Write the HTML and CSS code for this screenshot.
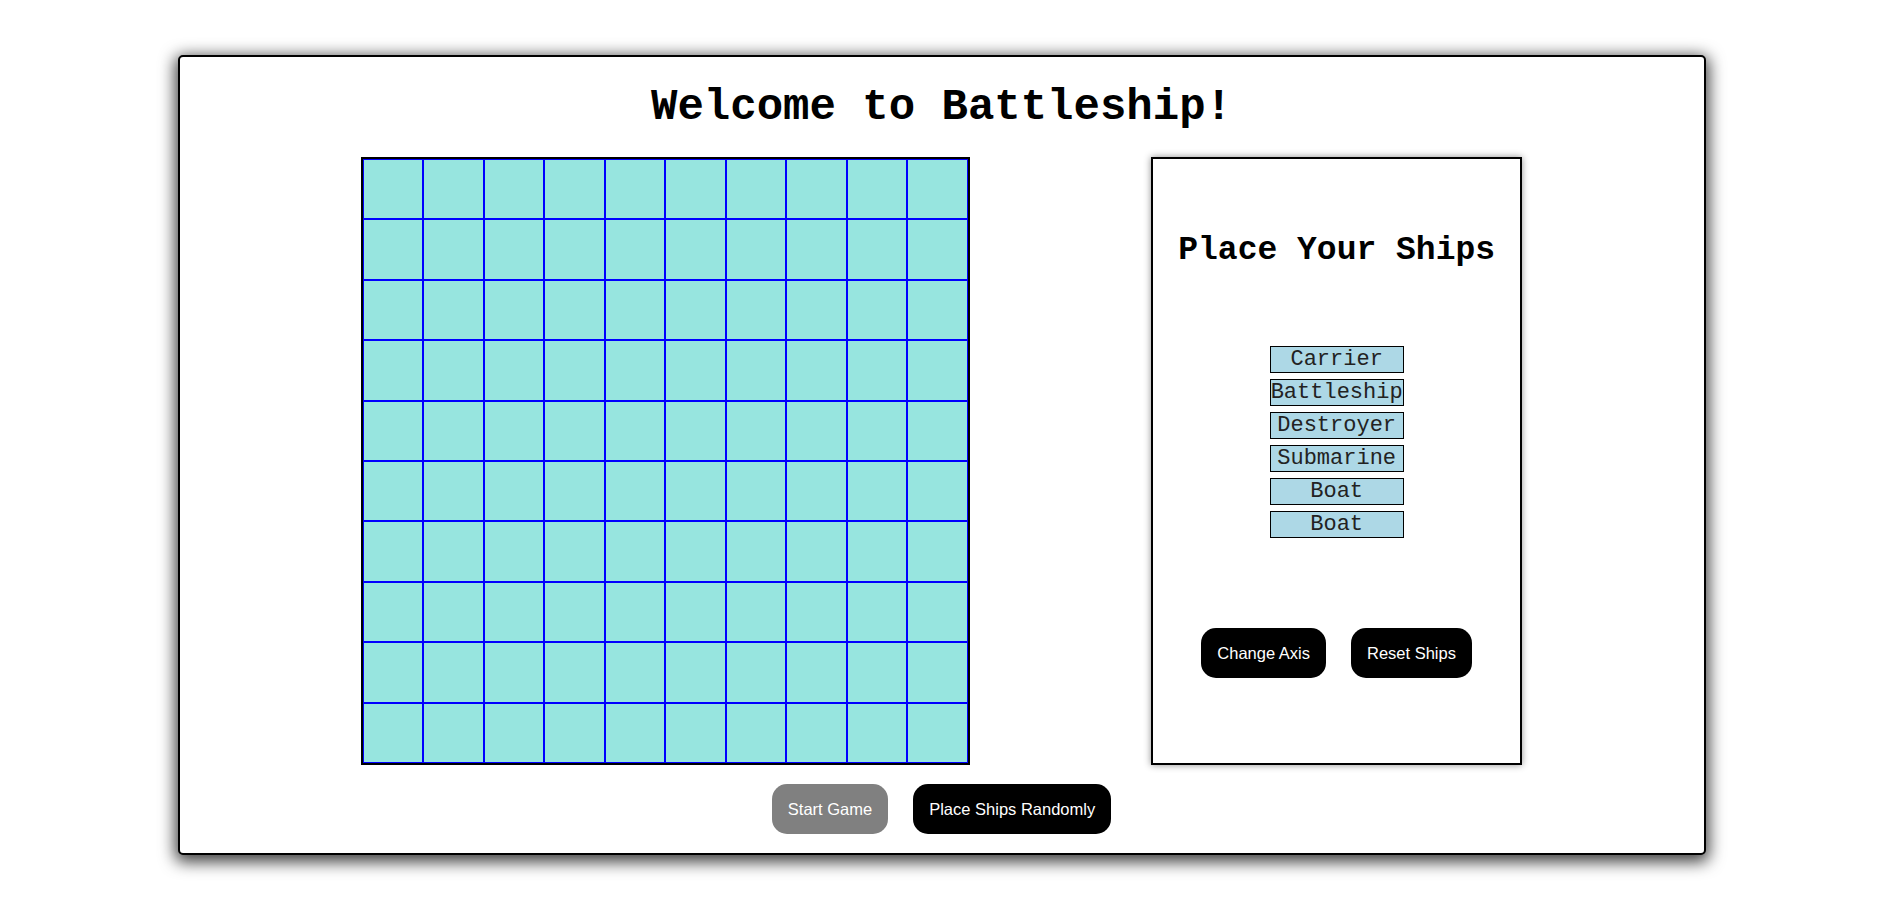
FILE: index.html
```html
<!DOCTYPE html>
<html lang="en">
<head>
<meta charset="utf-8">
<title>Battleship</title>
<link rel="stylesheet" href="styles.css">
</head>
<body>
<div class="game">
  <h1 class="title">Welcome to Battleship!</h1>
  <div class="main">
    <div class="board" id="board"></div>
    <div class="panel">
      <h2 class="panel-title">Place Your Ships</h2>
      <div class="ships">
        <div class="ship">Carrier</div>
        <div class="ship">Battleship</div>
        <div class="ship">Destroyer</div>
        <div class="ship">Submarine</div>
        <div class="ship">Boat</div>
        <div class="ship">Boat</div>
      </div>
      <div class="panel-actions">
        <button class="btn">Change Axis</button>
        <button class="btn">Reset Ships</button>
      </div>
    </div>
  </div>
  <div class="actions">
    <button class="btn btn-disabled">Start Game</button>
    <button class="btn">Place Ships Randomly</button>
  </div>
</div>
<script>
  var b = document.getElementById('board');
  for (var i = 0; i < 100; i++) {
    var c = document.createElement('div');
    c.className = 'cell';
    b.appendChild(c);
  }
</script>
</body>
</html>
```
FILE: styles.css
```css
html, body {
  margin: 0;
  padding: 0;
  background: #fff;
}

body {
  min-height: 912px;
}

.game {
  box-sizing: border-box;
  width: 1528px;
  margin: 55px auto 0;
  border: 2px solid #000;
  border-radius: 5px;
  box-shadow: 0 4px 16px 3px rgba(0, 0, 0, 0.75);
  padding-bottom: 19px;
  background: #fff;
}

.title {
  margin: 25px 0 25px;
  font-family: "Liberation Mono", "Courier New", monospace;
  font-weight: bold;
  font-size: 44px;
  line-height: 50px;
  text-align: center;
  color: #000;
}

.main {
  display: flex;
  justify-content: space-evenly;
  align-items: flex-start;
}

.board {
  display: grid;
  grid-template-columns: repeat(10, 58.5px);
  grid-template-rows: repeat(10, 58.4px);
  gap: 2px;
  padding: 1px;
  border: 2px solid #000;
  background: #0000ff;
}

.cell {
  background: #97e5df;
}

.panel {
  box-sizing: border-box;
  width: 371px;
  height: 608px;
  border: 2px solid #000;
  box-shadow: 0 0 7px rgba(0, 0, 0, 0.45);
  display: flex;
  flex-direction: column;
  align-items: center;
  padding-top: 73px;
}

.panel-title {
  margin: 0;
  font-family: "Liberation Mono", "Courier New", monospace;
  font-weight: bold;
  font-size: 33px;
  line-height: 38px;
  color: #000;
}

.ships {
  margin-top: 76px;
  display: flex;
  flex-direction: column;
  gap: 6px;
}

.ship {
  box-sizing: border-box;
  width: 134px;
  height: 27px;
  border: 1px solid #000;
  background: #add8e6;
  font-family: "Liberation Mono", "Courier New", monospace;
  font-size: 22px;
  line-height: 25px;
  text-align: center;
  color: #222;
  white-space: nowrap;
}

.panel-actions {
  margin-top: 90px;
  display: flex;
  gap: 25px;
}

.btn {
  font-family: "Liberation Sans", Arial, sans-serif;
  font-size: 16.5px;
  line-height: 19px;
  padding: 15.5px 16px;
  border: none;
  border-radius: 15px;
  background: #000;
  color: #fff;
  cursor: pointer;
}

.btn-disabled {
  background: #808080;
}

.actions {
  margin-top: 19px;
  display: flex;
  justify-content: center;
  gap: 25px;
}
```
